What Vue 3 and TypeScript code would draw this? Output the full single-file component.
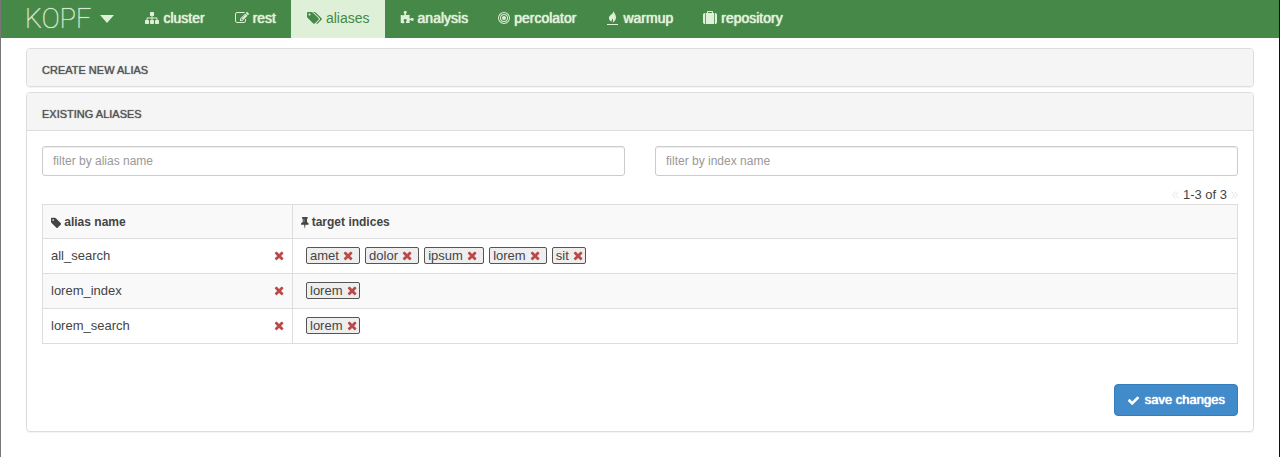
<script setup lang="ts">
import { ref } from 'vue'

interface Glyph { box: string; d: string }
interface Tab { name: string; icon: string }
interface Alias { name: string; indices: string[] }

const glyphs: Record<string, Glyph> = {
  sitemap: { box: '0 0 1792 1792', d: 'M1792 1248v320q0 40-28 68t-68 28h-320q-40 0-68-28t-28-68v-320q0-40 28-68t68-28h96v-192h-512v192h96q40 0 68 28t28 68v320q0 40-28 68t-68 28h-320q-40 0-68-28t-28-68v-320q0-40 28-68t68-28h96v-192h-512v192h96q40 0 68 28t28 68v320q0 40-28 68t-68 28h-320q-40 0-68-28t-28-68v-320q0-40 28-68t68-28h96v-192q0-52 38-90t90-38h512v-192h-96q-40 0-68-28t-28-68v-320q0-40 28-68t68-28h320q40 0 68 28t28 68v320q0 40-28 68t-68 28h-96v192h512q52 0 90 38t38 90v192h96q40 0 68 28t28 68z' },
  edit: { box: '0 0 1792 1792', d: 'M888 1184l116-116-152-152-116 116v56h96v96h56zm440-720q-16-16-33 1l-350 350q-17 17-1 33t33-1l350-350q17-17 1-33zm80 594v190q0 119-84.5 203.5t-203.5 84.5h-832q-119 0-203.5-84.5t-84.5-203.5v-832q0-119 84.5-203.5t203.5-84.5h832q63 0 117 25 15 7 18 23 3 17-9 29l-49 49q-14 14-32 8-23-6-45-6h-832q-66 0-113 47t-47 113v832q0 66 47 113t113 47h832q66 0 113-47t47-113v-126q0-13 9-22l64-64q15-15 35-7t20 29zm-96-738l288 288-672 672h-288v-288zm444 132l-92 92-288-288 92-92q28-28 68-28t68 28l152 152q28 28 28 68t-28 68z' },
  tags: { box: '0 0 2048 1792', d: 'M576 448q0-53-37.5-90.5t-90.5-37.5-90.5 37.5-37.5 90.5 37.5 90.5 90.5 37.5 90.5-37.5 37.5-90.5zm1067 576q0 53-37 90l-491 492q-39 37-91 37-53 0-90-37l-715-716q-38-37-64.5-101t-26.5-117v-416q0-52 38-90t90-38h416q53 0 117 26.5t102 64.5l715 714q37 39 37 91zm384 0q0 53-37 90l-491 492q-39 37-91 37-36 0-59-14t-53-45l470-470q37-37 37-90 0-52-37-91l-715-714q-38-38-102-64.5t-117-26.5h224q53 0 117 26.5t102 64.5l715 714q37 39 37 91z' },
  puzzle: { box: '0 0 1792 1792', d: 'M1755 1083q0 81-44.5 135t-123.5 54q-41 0-77.5-17.5t-59-38-56.5-38-71-17.5q-110 0-110 124 0 39 16 115t15 115v5q-22 0-33 1-34 3-97.5 11.5t-115.5 13.5-98 5q-61 0-103-26.5t-42-83.5q0-37 17.5-71t38-56.5 38-59 17.5-77.5q0-79-54-123.5t-135-44.5q-84 0-143 45.5t-59 127.5q0 43 15 83t33.5 64.5 33.5 53 15 50.5q0 45-46 89-37 35-117 35-95 0-245-24-9-2-27.5-4t-27.5-4l-13-2q-1 0-3-1-2 0-2-1v-1024q2 1 17.5 3.5t34 5 21.5 3.5q150 24 245 24 80 0 117-35 46-44 46-89 0-22-15-50.5t-33.5-53-33.5-64.5-15-83q0-82 59-127.5t144-45.5q80 0 134 44.5t54 123.5q0 41-17.5 77.5t-38 59-38 56.5-17.5 71q0 57 42 83.5t103 26.5q64 0 180-15t163-17v2q-1 2-3.5 17.5t-5 34-3.5 21.5q-24 150-24 245 0 80 35 117 44 46 89 46 22 0 50.5-15t53-33.5 64.5-33.5 83-15q82 0 127.5 59t45.5 143z' },
  rings: { box: '0 0 12 14', d: 'M6 1a6 6 0 1 0 0 12a6 6 0 1 0 0-12zM6 2a5 5 0 1 1 0 10a5 5 0 1 1 0-10zM6 3a4 4 0 1 0 0 8a4 4 0 1 0 0-8zM6 4a3 3 0 1 1 0 6a3 3 0 1 1 0-6zM6 5a2 2 0 1 0 0 4a2 2 0 1 0 0-4z' },
  fire: { box: '-1 0 13 14', d: 'M0 13h11v1H0zM6.6 0C7 2.200 9 3.600 9 6.500C9 8.800 7.500 10.600 5.600 11.500C6.300 10 6.300 8.700 5.400 7.600C5.200 8.700 4.800 9.300 4.200 10.600C2.800 9.800 2 8.600 2 7C2 4 6.600 3.200 6.600 0z' },
  suitcase: { box: '0 0 1792 1792', d: 'M640 256h512v-128h-512v128zm-352 0v1408h-64q-92 0-158-66t-66-158v-960q0-92 66-158t158-66h64zm1120 0v1408h-1024v-1408h128v-160q0-40 28-68t68-28h576q40 0 68 28t28 68v160h128zm384 224v960q0 92-66 158t-158 66h-64v-1408h64q92 0 158 66t66 158z' },
  tag: { box: '128 0 1536 1792', d: 'M576 448q0-53-37.5-90.5t-90.5-37.5-90.5 37.5-37.5 90.5 37.5 90.5 90.5 37.5 90.5-37.5 37.5-90.5zm1067 576q0 53-37 90l-491 492q-39 37-91 37-53 0-90-37l-715-716q-38-37-64.5-101t-26.5-117v-416q0-52 38-90t90-38h416q53 0 117 26.5t102 64.5l715 714q37 39 37 91z' },
  pin: { box: '320 128 1152 1792', d: 'M800 864v-448q0-14-9-23t-23-9-23 9-9 23v448q0 14 9 23t23 9 23-9 9-23zm672 352q0 26-19 45t-45 19h-429l-51 483q-2 12-10.5 20.5t-20.5 8.5h-1q-27 0-32-27l-76-485h-404q-26 0-45-19t-19-45q0-123 78.5-221.5t177.5-98.5v-512q-52 0-90-38t-38-90 38-90 90-38h640q52 0 90 38t38 90-38 90-90 38v512q99 0 177.5 98.5t78.5 221.5z' },
  times: { box: '192 0 1408 1792', d: 'M1490 1322q0 40-28 68l-136 136q-28 28-68 28t-68-28l-294-294-294 294q-28 28-68 28t-68-28l-136-136q-28-28-28-68t28-68l294-294-294-294q-28-28-28-68t28-68l136-136q28-28 68-28t68 28l294 294 294-294q28-28 68-28t68 28l136 136q28 28 28 68t-28 68l-294 294 294 294q28 28 28 68z' },
  check: { box: '0 0 1792 1792', d: 'M1671 566q0 40-28 68l-724 724-136 136q-28 28-68 28t-68-28l-136-136-362-362q-28-28-28-68t28-68l136-136q28-28 68-28t68 28l294 295 656-657q28-28 68-28t68 28l136 136q28 28 28 68z' },
}

const tabs: Tab[] = [
  { name: 'cluster', icon: 'sitemap' },
  { name: 'rest', icon: 'edit' },
  { name: 'aliases', icon: 'tags' },
  { name: 'analysis', icon: 'puzzle' },
  { name: 'percolator', icon: 'rings' },
  { name: 'warmup', icon: 'fire' },
  { name: 'repository', icon: 'suitcase' },
]

const active = ref('aliases')
const aliasFilter = ref('')
const indexFilter = ref('')
const aliases = ref<Alias[]>([
  { name: 'all_search', indices: ['amet', 'dolor', 'ipsum', 'lorem', 'sit'] },
  { name: 'lorem_index', indices: ['lorem'] },
  { name: 'lorem_search', indices: ['lorem'] },
])

function removeAlias(alias: Alias) {
  aliases.value = aliases.value.filter(a => a !== alias)
}
function removeIndex(alias: Alias, index: string) {
  alias.indices = alias.indices.filter(i => i !== index)
}
</script>

<template>
  <div class="page">
    <header class="navbar">
      <button class="brand" type="button">
        KOPF
        <svg class="caret" viewBox="0 0 14 8" aria-hidden="true"><path d="M0 0h14L7 8z" /></svg>
      </button>
      <nav class="tabs">
        <a v-for="tab in tabs" :key="tab.name" href="#" class="tab" :class="{ active: tab.name === active }" @click.prevent="active = tab.name">
          <svg class="icon" :viewBox="glyphs[tab.icon].box" aria-hidden="true"><path fill-rule="evenodd" :d="glyphs[tab.icon].d" /></svg>
          <span>{{ tab.name }}</span>
        </a>
      </nav>
    </header>

    <main class="content">
      <section class="panel">
        <h2 class="heading">CREATE NEW ALIAS</h2>
      </section>

      <section class="panel">
        <h2 class="heading ruled">EXISTING ALIASES</h2>
        <div class="body">
          <div class="filters">
            <input v-model="aliasFilter" type="text" placeholder="filter by alias name" aria-label="filter by alias name">
            <input v-model="indexFilter" type="text" placeholder="filter by index name" aria-label="filter by index name">
          </div>
          <div class="pager">
            <button type="button" disabled aria-label="previous page"><svg viewBox="0 0 7 8" aria-hidden="true"><path d="M3.500 .5L.5 4l3 3.500M6.500 .5l-3 3.500l3 3.500" /></svg></button>
            <span>1-3 of 3</span>
            <button type="button" disabled aria-label="next page"><svg viewBox="0 0 7 8" aria-hidden="true"><path d="M.5 .5l3 3.500l-3 3.500M3.500 .5l3 3.500l-3 3.500" /></svg></button>
          </div>
          <table>
            <thead>
              <tr>
                <th class="name" scope="col"><span class="label"><svg class="icon" :viewBox="glyphs.tag.box" aria-hidden="true"><path fill-rule="evenodd" :d="glyphs.tag.d" /></svg>alias name</span></th>
                <th scope="col"><span class="label"><svg class="icon" :viewBox="glyphs.pin.box" aria-hidden="true"><path fill-rule="evenodd" :d="glyphs.pin.d" /></svg>target indices</span></th>
              </tr>
            </thead>
            <tbody>
              <tr v-for="alias in aliases" :key="alias.name">
                <td>
                  <div class="alias">
                    <span>{{ alias.name }}</span>
                    <button class="remove" type="button" :aria-label="`remove ${alias.name}`" @click="removeAlias(alias)"><svg class="icon" :viewBox="glyphs.times.box" aria-hidden="true"><path :d="glyphs.times.d" /></svg></button>
                  </div>
                </td>
                <td>
                  <div class="indices">
                    <span v-for="index in alias.indices" :key="index" class="index">
                      {{ index }}
                      <button class="remove" type="button" :aria-label="`remove ${index} from ${alias.name}`" @click="removeIndex(alias, index)"><svg class="icon" :viewBox="glyphs.times.box" aria-hidden="true"><path :d="glyphs.times.d" /></svg></button>
                    </span>
                  </div>
                </td>
              </tr>
            </tbody>
          </table>
          <div class="actions">
            <button class="save" type="button"><svg class="icon" :viewBox="glyphs.check.box" aria-hidden="true"><path :d="glyphs.check.d" /></svg>save changes</button>
          </div>
        </div>
      </section>
    </main>
  </div>
</template>

<style>
body {
  margin: 0;
  background: #fff;
}
</style>

<style scoped>
.page {
  box-sizing: border-box;
  min-height: 100vh;
  border-left: 1px solid #777;
  border-right: 1px solid #111;
  font: 13px/18px "Liberation Sans", Arial, sans-serif;
  color: #444;
}
button {
  margin: 0;
  padding: 0;
  border: 0;
  background: none;
  font: inherit;
  color: inherit;
  cursor: pointer;
}
svg {
  display: block;
  flex: none;
}
.icon {
  height: 1em;
  fill: currentColor;
}
.navbar {
  display: flex;
  height: 38px;
  padding-left: 24px;
  background: #468847;
  color: #dff0d8;
}
.brand {
  display: flex;
  align-items: center;
  gap: 9px;
  margin-right: 16px;
  font: 100 27px/38px Roboto, sans-serif;
  text-shadow: 0 0 1px currentColor;
}
.caret {
  width: 14px;
  fill: currentColor;
}
.tabs {
  display: flex;
}
.tab {
  box-sizing: border-box;
  display: flex;
  align-items: center;
  gap: 4px;
  padding: 0 15px 2px;
  font-size: 14px;
  line-height: 20px;
  color: #dff0d8;
  text-decoration: none;
  text-shadow: 0 0 1px currentColor, 0 0 1px currentColor;
}
.tab.active {
  background: #dff0d8;
  color: #468847;
  text-shadow: none;
}
.content {
  display: grid;
  gap: 5px;
  padding: 10px 25px 24px;
}
.panel {
  border: 1px solid #ddd;
  border-radius: 4px;
  box-shadow: 0 1px 1px rgba(0, 0, 0, 0.05);
}
.heading {
  margin: 0;
  padding: 13px 15px 8px;
  border-radius: 3px;
  background: #f5f5f5;
  color: #555;
  font-size: 11px;
  font-weight: 400;
  line-height: 16px;
  text-shadow: 0 0 1px currentColor;
}
.ruled {
  border-bottom: 1px solid #ddd;
  border-radius: 3px 3px 0 0;
}
.body {
  padding: 15px;
}
.filters {
  display: grid;
  grid-template-columns: 1fr 1fr;
  gap: 30px;
}
.filters input {
  box-sizing: border-box;
  width: 100%;
  height: 30px;
  padding: 5px 10px;
  border: 1px solid #ccc;
  border-radius: 3px;
  box-shadow: inset 0 1px 1px rgba(0, 0, 0, 0.075);
  font: 12px/18px "Liberation Sans", Arial, sans-serif;
  color: #555;
}
.filters input::placeholder {
  color: #999;
  opacity: 1;
}
.pager {
  display: flex;
  justify-content: flex-end;
  align-items: center;
  gap: 4px;
  padding-top: 10px;
}
.pager svg {
  width: 7px;
  fill: none;
  stroke: #e5e5e5;
}
table {
  width: 100%;
  border-collapse: collapse;
}
th,
td {
  box-sizing: border-box;
  padding: 8px;
  border: 1px solid #ddd;
  text-align: left;
}
th {
  padding: 9px 8px 7px;
  background: #f9f9f9;
  font-size: 12px;
  line-height: 17px;
}
.name {
  width: 250px;
}
tbody tr:nth-child(even) {
  background: #f9f9f9;
}
.label,
.alias,
.indices,
.index {
  display: flex;
}
.label,
.index {
  align-items: center;
}
.label {
  gap: 3px;
}
.alias,
.indices {
  align-items: flex-start;
}
.alias {
  justify-content: space-between;
}
.alias .remove {
  padding-top: 2px;
}
.indices {
  gap: 5px;
  min-height: 18px;
  padding-left: 5px;
}
.index {
  gap: 4px;
  padding: 0 6px 0 3px;
  border: 1px solid #555;
  border-radius: 2px;
  background: #eee;
  line-height: 15px;
}
.index:last-child {
  padding-right: 2px;
}
.remove {
  color: #b94a48;
}
.actions {
  display: flex;
  justify-content: flex-end;
  padding-top: 40px;
}
.save {
  display: flex;
  align-items: center;
  gap: 5px;
  padding: 6px 12px;
  border: 1px solid #357ebd;
  border-radius: 4px;
  background: #428bca;
  color: #fff;
  text-shadow: 0 0 1px currentColor, 0 0 1px currentColor;
}
</style>
